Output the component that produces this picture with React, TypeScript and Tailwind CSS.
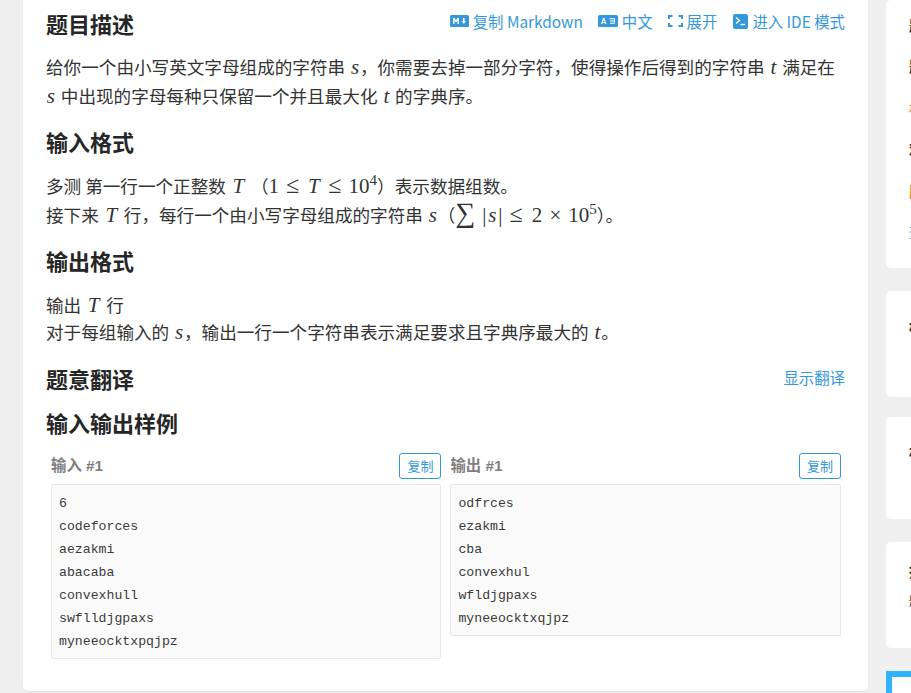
import React from 'react';

const cjk = "font-['Noto_Sans_CJK_SC','Liberation_Sans',sans-serif]";
const serif = "font-['Liberation_Serif',serif] text-[21px] leading-none";

// KaTeX letters are wider than the serif ones, so each gets a fixed box
const S = ({ className = '' }: { className?: string }) => (
  <span className={`${serif} italic inline-block w-[9.8px] text-center ${className}`}>s</span>
);
const SmallT = ({ className = '' }: { className?: string }) => (
  <span className={`${serif} italic inline-block w-[7.6px] text-center ${className}`}>t</span>
);
const BigT = ({ className = '' }: { className?: string }) => (
  <span className={`${serif} italic inline-block w-[15px] text-center ${className}`}>T</span>
);
const N = ({ children, className = '' }: { children: React.ReactNode; className?: string }) => (
  <span className={`${serif} ${className}`}>{children}</span>
);
const Op = ({ children }: { children: React.ReactNode }) => (
  <span className="font-['Liberation_Serif',serif] text-[24px] leading-none inline-block w-[16.3px] mx-[5.5px] text-center">{children}</span>
);
const Sup = ({ children }: { children: React.ReactNode }) => (
  <span className="font-['Liberation_Serif',serif] text-[15px] leading-none relative -top-[8px]">{children}</span>
);

const MdIcon = () => (
  <svg viewBox="0 0 19 12" className="h-3 w-[19px] shrink-0">
    <rect width="19" height="12" rx="1.5" fill="#3498db" />
    <path d="M3 9V3h1.5L6 5l1.5-2H9v6H7.5V5.5L6 7.4 4.5 5.5V9z M13 3h1.6v3H16l-2.2 3-2.2-3H13z" fill="#fff" />
  </svg>
);

const LangIcon = () => (
  <svg viewBox="0 0 20 12" className="h-3 w-5 shrink-0">
    <rect width="20" height="12" rx="1.5" fill="#3498db" />
    <path d="M3 9l2-6h1.4l2 6H7.1l-.3-1H4.7l-.3 1z M5 7h1.5L5.7 4.6z" fill="#fff" />
    <path d="M11.5 3.2h5.5v1h-5.5z M12 8.8h5v-1h-5z M16 4.2h1v4h-1z M12 5.5h4v1h-4z" fill="#fff" />
  </svg>
);

const ExpandIcon = () => (
  <svg viewBox="0 0 15 12" className="h-3 w-[15px] shrink-0" fill="none" stroke="#3498db" strokeWidth="2">
    <path d="M4.5 1H1v3M10.5 1H14v3M4.5 11H1V8M10.5 11H14V8" />
  </svg>
);

const IdeIcon = () => (
  <svg viewBox="0 0 15 15" className="h-[15px] w-[15px] shrink-0">
    <rect width="15" height="15" rx="2" fill="#3498db" />
    <path d="M3 3.5l3.5 3-3.5 3" fill="none" stroke="#fff" strokeWidth="1.4" />
    <path d="M7.5 10.5h4.5" stroke="#fff" strokeWidth="1.4" />
  </svg>
);

const Heading = ({ children, className = '' }: { children: React.ReactNode; className?: string }) => (
  <h2 className={`text-[22px] leading-[30px] font-bold text-[#262626] ${className}`}>{children}</h2>
);

const Sample = ({ label, lines, className = '' }: { label: string; lines: string[]; className?: string }) => (
  <div className={`min-w-0 ${className}`}>
    <div className="flex items-center justify-between h-[26px] mb-[5px]">
      <span className="font-['Liberation_Sans','Noto_Sans_CJK_SC',sans-serif] text-[15.4px] font-bold text-[#7f7f7f]">{label}</span>
      <button className="h-[26px] w-[42px] rounded-[3px] border border-[#3498db] text-[13px] text-[#3498db] bg-white">复制</button>
    </div>
    <pre className="border border-[#e8e8e8] rounded-[2px] bg-[#fafafa] px-[7px] pt-[7px] pb-[5px] font-['Liberation_Mono',monospace] text-[13.2px] leading-[23px] text-[#3a3a3a]">
      {lines.join('\n')}
    </pre>
  </div>
);

const SideCard = ({ height, children }: { height: string; children?: React.ReactNode }) => (
  <div className={`${height} rounded-l-[5px] bg-white pl-[23px] overflow-hidden text-[#262626] font-bold text-[15px]`}>
    {children}
  </div>
);

export default function App() {
  return (
    <div className={`${cjk} h-[693px] w-[911px] overflow-hidden bg-[#efefef] flex items-start text-[#333]`}>
      <main className="ml-[23px] w-[845px] h-[691px] rounded-b-[5px] bg-white shadow-[0_1px_2px_rgba(0,0,0,0.06)] px-[23px] pt-[8px] shrink-0">
        <div className="flex items-center justify-between">
          <Heading>题目描述</Heading>
          <div className="flex items-center text-[15.4px] text-[#3498db] leading-[26px] -mt-[4px]">
            <span className="flex items-center gap-[4px]"><MdIcon />复制 Markdown</span>
            <span className="flex items-center gap-[4px] ml-[15px]"><LangIcon />中文</span>
            <span className="flex items-center gap-[4px] ml-[15px]"><ExpandIcon />展开</span>
            <span className="flex items-center gap-[4px] ml-[16px]"><IdeIcon />进入 IDE 模式</span>
          </div>
        </div>

        <div className="mt-[14px] text-[17.6px] leading-[29px]">
          <p>给你一个由小写英文字母组成的字符串<S className="ml-[5px]" />，你需要去掉一部分字符，使得操作后得到的字符串<SmallT className="mx-[5px]" />满足在</p>
          <p><S className="mr-[5px]" />中出现的字母每种只保留一个并且最大化<SmallT className="mx-[5px]" />的字典序。</p>
        </div>

        <Heading className="mt-[16px]">输入格式</Heading>
        <div className="mt-[16px] text-[17.6px] leading-[28px]">
          <p>
            多测 第一行一个正整数<BigT className="mx-[5px]" />（<N className="inline-block w-[10.5px]">1</N><Op>≤</Op><BigT /><Op>≤</Op><N>10</N><Sup>4</Sup>）表示数据组数。
          </p>
          <p className="-mt-[1px]">
            接下来<BigT className="mx-[5px]" />行，每行一个由小写字母组成的字符串<S className="ml-[5px]" />（<span className="font-['Liberation_Serif',serif] text-[28px] leading-none">∑</span><N className="ml-[7px]">|</N><S className="mx-[1px]" /><N>|</N><Op>≤</Op><N className="ml-[2px]">2</N><span className="font-['Liberation_Serif',serif] text-[21px] leading-none inline-block w-[16px] mx-[5px] text-center">×</span><N>10</N><Sup>5</Sup>）。
          </p>
        </div>

        <Heading className="mt-[16px]">输出格式</Heading>
        <div className="mt-[16px] text-[17.6px] leading-[27px]">
          <p>输出<BigT className="mx-[5px]" />行</p>
          <p>对于每组输入的<S className="ml-[5px]" />，输出一行一个字符串表示满足要求且字典序最大的<SmallT className="ml-[5px]" />。</p>
        </div>

        <div className="flex items-center justify-between mt-[18px]">
          <Heading>题意翻译</Heading>
          <span className="text-[15.4px] text-[#3498db]">显示翻译</span>
        </div>

        <Heading className="mt-[14px]">输入输出样例</Heading>

        <div className="flex items-start gap-[9px] mt-[16px] pl-[5px] pr-[4px]">
          <Sample
            className="w-[390.4px] shrink-0"
            label="输入 #1"
            lines={['6', 'codeforces', 'aezakmi', 'abacaba', 'convexhull', 'swflldjgpaxs', 'myneeocktxpqjpz']}
          />
          <Sample
            className="flex-1"
            label="输出 #1"
            lines={['odfrces', 'ezakmi', 'cba', 'convexhul', 'wfldjgpaxs', 'myneeocktxqjpz']}
          />
        </div>
      </main>

      <aside className="ml-[18px] flex-1 flex flex-col">
        <SideCard height="h-[268px]">
          <div className="pt-[4px] leading-[41.4px] whitespace-nowrap">
            <p>题目</p>
            <p>题目</p>
            <p className="font-normal text-[#e67e22]">标签</p>
            <p>难度</p>
            <p className="text-[#e67e22]">历史</p>
            <p className="font-normal text-[#3498db]">查看</p>
          </div>
        </SideCard>
        <SideCard height="h-[106px] mt-[23px]">
          <p className="pt-[25px]">标签</p>
        </SideCard>
        <SideCard height="h-[102px] mt-[20px]">
          <p className="pt-[24px]">相关</p>
        </SideCard>
        <SideCard height="h-[106px] mt-[23px]">
          <p className="pt-[18px] text-[#262626]">推荐</p>
          <p className="font-normal text-[12px] mt-[9px]">题单</p>
        </SideCard>
        <div className="mt-[23px] h-[40px] border-[6px] border-[#2fb3ff] bg-white" />
      </aside>
    </div>
  );
}
